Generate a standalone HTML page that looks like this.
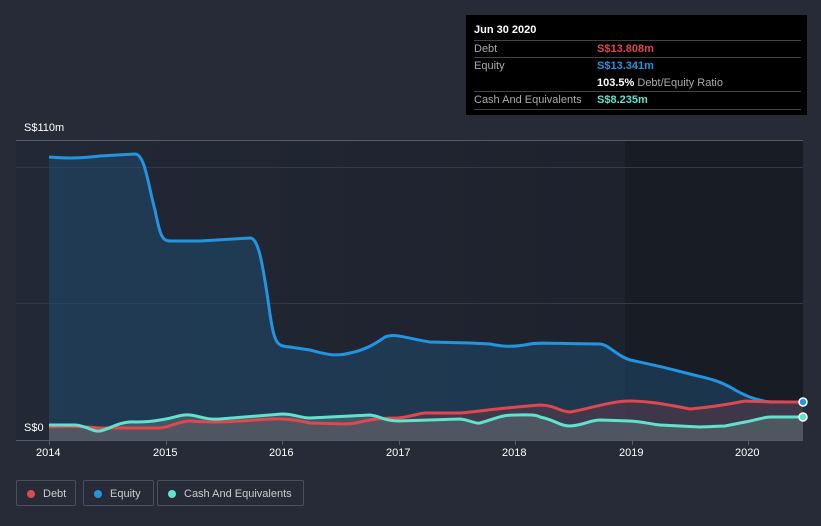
<!DOCTYPE html><html><head><style>
body{margin:0;width:821px;height:526px;background:#262b37;font-family:"Liberation Sans",sans-serif;overflow:hidden;position:relative}
.t{position:absolute;font-size:11px;color:#fff}
.tt{position:absolute;left:466px;top:15px;width:341px;height:100px;background:#000;font-size:11px}
.tt div.r{position:absolute;left:8px;width:327px;border-top:1px solid #444;height:17px}
.tt b{font-weight:bold}
.leg{position:absolute;top:480px;height:26px;border:1px solid #4a4f5a;border-radius:2px;color:#ccc;font-size:11px;line-height:26px;box-sizing:border-box}
.leg i{display:inline-block;width:8px;height:8px;border-radius:50%;margin:0 8px 0 10px;vertical-align:-0.5px}
</style></head><body>
<svg width="821" height="526" style="position:absolute;left:0;top:0">
<defs><linearGradient id="pg" x1="0" x2="1"><stop offset="0" stop-color="#232836"/><stop offset="1" stop-color="#1c202a"/></linearGradient></defs>
<rect x="16" y="140" width="787" height="300" fill="url(#pg)"/>
<rect x="625" y="140" width="178" height="300" fill="#181c25"/>
<line x1="16" y1="140.5" x2="803" y2="140.5" stroke="#555a66"/>
<line x1="16" y1="167.5" x2="803" y2="167.5" stroke="#353a46"/>
<line x1="16" y1="303.5" x2="803" y2="303.5" stroke="#353a46"/>
<path d="M49,157 C62,158 75,159 100,156 L135,154 C145,154 148,185 155,210 C160,235 162,241 170,241 L200,241 L250,238 C258,238 262,260 268,300 C274,345 276,346 290,347 L310,350 C325,354 335,357 350,353 C365,350 375,344 385,337 C395,333 405,338 430,342 L470,343 L490,344 C500,346 510,348 530,344 C540,342 560,344 600,344 C610,345 615,355 630,360 C645,363 660,366 690,374 C705,378 715,379 730,387 C745,396 755,400 770,402 L803,402 L803,440 L49,440Z" fill="#1f4a6e" fill-opacity="0.55"/>
<path d="M49,427 C62,426 75,426 100,428 L158,428 C170,428 178,421 190,421 C205,422 215,423 255,420 C270,419 285,417 310,423 L345,424 C360,424 365,418 398,418 C410,417 420,413 425,413 L460,413 C475,412 490,409 540,405 C555,405 560,412 570,412 C585,410 610,401 630,401 C645,401 660,403 690,409 C700,408 715,407 745,401 C760,402 780,402 803,402 L803,440 L49,440Z" fill="#6b3a48" fill-opacity="0.45"/>
<path d="M49,425 L75,425 C88,426 92,432 100,431 C110,429 120,421 135,422 C145,422 155,421 160,420 C175,418 180,414 190,415 C200,416 205,420 220,419 L282,414 C295,414 300,418 310,418 L370,415 C380,416 385,421 398,421 L460,419 C470,420 475,424 480,423 C495,419 500,415 515,415 C525,415 535,414 540,417 C555,420 560,426 570,426 C585,425 590,420 600,420 L630,421 C645,422 650,424 660,425 L700,427 C710,427 718,426 725,426 C735,424 740,423 745,422 C760,419 765,417 770,417 L803,417 L803,440 L49,440Z" fill="#5a6b70" fill-opacity="0.6"/>
<g fill="none" stroke-width="3">
<path d="M49,157 C62,158 75,159 100,156 L135,154 C145,154 148,185 155,210 C160,235 162,241 170,241 L200,241 L250,238 C258,238 262,260 268,300 C274,345 276,346 290,347 L310,350 C325,354 335,357 350,353 C365,350 375,344 385,337 C395,333 405,338 430,342 L470,343 L490,344 C500,346 510,348 530,344 C540,342 560,344 600,344 C610,345 615,355 630,360 C645,363 660,366 690,374 C705,378 715,379 730,387 C745,396 755,400 770,402 L803,402" stroke="#2394df"/>
<path d="M49,427 C62,426 75,426 100,428 L158,428 C170,428 178,421 190,421 C205,422 215,423 255,420 C270,419 285,417 310,423 L345,424 C360,424 365,418 398,418 C410,417 420,413 425,413 L460,413 C475,412 490,409 540,405 C555,405 560,412 570,412 C585,410 610,401 630,401 C645,401 660,403 690,409 C700,408 715,407 745,401 C760,402 780,402 803,402" stroke="#e0474f"/>
<path d="M49,425 L75,425 C88,426 92,432 100,431 C110,429 120,421 135,422 C145,422 155,421 160,420 C175,418 180,414 190,415 C200,416 205,420 220,419 L282,414 C295,414 300,418 310,418 L370,415 C380,416 385,421 398,421 L460,419 C470,420 475,424 480,423 C495,419 500,415 515,415 C525,415 535,414 540,417 C555,420 560,426 570,426 C585,425 590,420 600,420 L630,421 C645,422 650,424 660,425 L700,427 C710,427 718,426 725,426 C735,424 740,423 745,422 C760,419 765,417 770,417 L803,417" stroke="#5fe3cf"/>
</g>
<line x1="16" y1="440.5" x2="803" y2="440.5" stroke="#555a66"/>
<g stroke="#555a66"><line x1="49.5" y1="440" x2="49.5" y2="445"/><line x1="166.5" y1="440" x2="166.5" y2="445"/><line x1="282.5" y1="440" x2="282.5" y2="445"/><line x1="399.5" y1="440" x2="399.5" y2="445"/><line x1="515.5" y1="440" x2="515.5" y2="445"/><line x1="632.5" y1="440" x2="632.5" y2="445"/><line x1="748.5" y1="440" x2="748.5" y2="445"/></g>
<circle cx="803" cy="402" r="4" fill="#2394df" stroke="#fff" stroke-width="1.5"/>
<circle cx="803" cy="417" r="4" fill="#5fe3cf" stroke="#fff" stroke-width="1.5"/>
</svg>
<div class="t" style="left:24px;top:122px">S$110m</div>
<div class="t" style="left:24px;top:422px">S$0</div>
<div class="t" style="left:36px;top:447px">2014</div><div class="t" style="left:153px;top:447px">2015</div><div class="t" style="left:269px;top:447px">2016</div><div class="t" style="left:386px;top:447px">2017</div><div class="t" style="left:502px;top:447px">2018</div><div class="t" style="left:619px;top:447px">2019</div><div class="t" style="left:735px;top:447px">2020</div>
<div class="tt">
<div style="position:absolute;left:8px;top:9px;color:#fff;font-weight:bold">Jun 30 2020</div>
<div class="r" style="top:25px"><span style="position:absolute;left:0;top:2px;color:#aaa">Debt</span><b style="position:absolute;left:123px;top:2px;color:#e0474f">S$13.808m</b></div>
<div class="r" style="top:42px;border-bottom:none"><span style="position:absolute;left:0;top:2px;color:#aaa">Equity</span><b style="position:absolute;left:123px;top:2px;color:#2394df">S$13.341m</b><span style="position:absolute;left:123px;top:19px;color:#fff;white-space:nowrap"><b>103.5%</b> <span style="color:#aaa">Debt/Equity Ratio</span></span></div>
<div class="r" style="top:76px;border-bottom:1px solid #444"><span style="position:absolute;left:0;top:2px;color:#aaa">Cash And Equivalents</span><b style="position:absolute;left:123px;top:2px;color:#5fe3cf">S$8.235m</b></div>
</div>
<div class="leg" style="left:16px;width:60px"><i style="background:#e0474f"></i>Debt</div>
<div class="leg" style="left:83px;width:71px"><i style="background:#2394df"></i>Equity</div>
<div class="leg" style="left:157px;width:147px"><i style="background:#5fe3cf"></i>Cash And Equivalents</div>
</body></html>
